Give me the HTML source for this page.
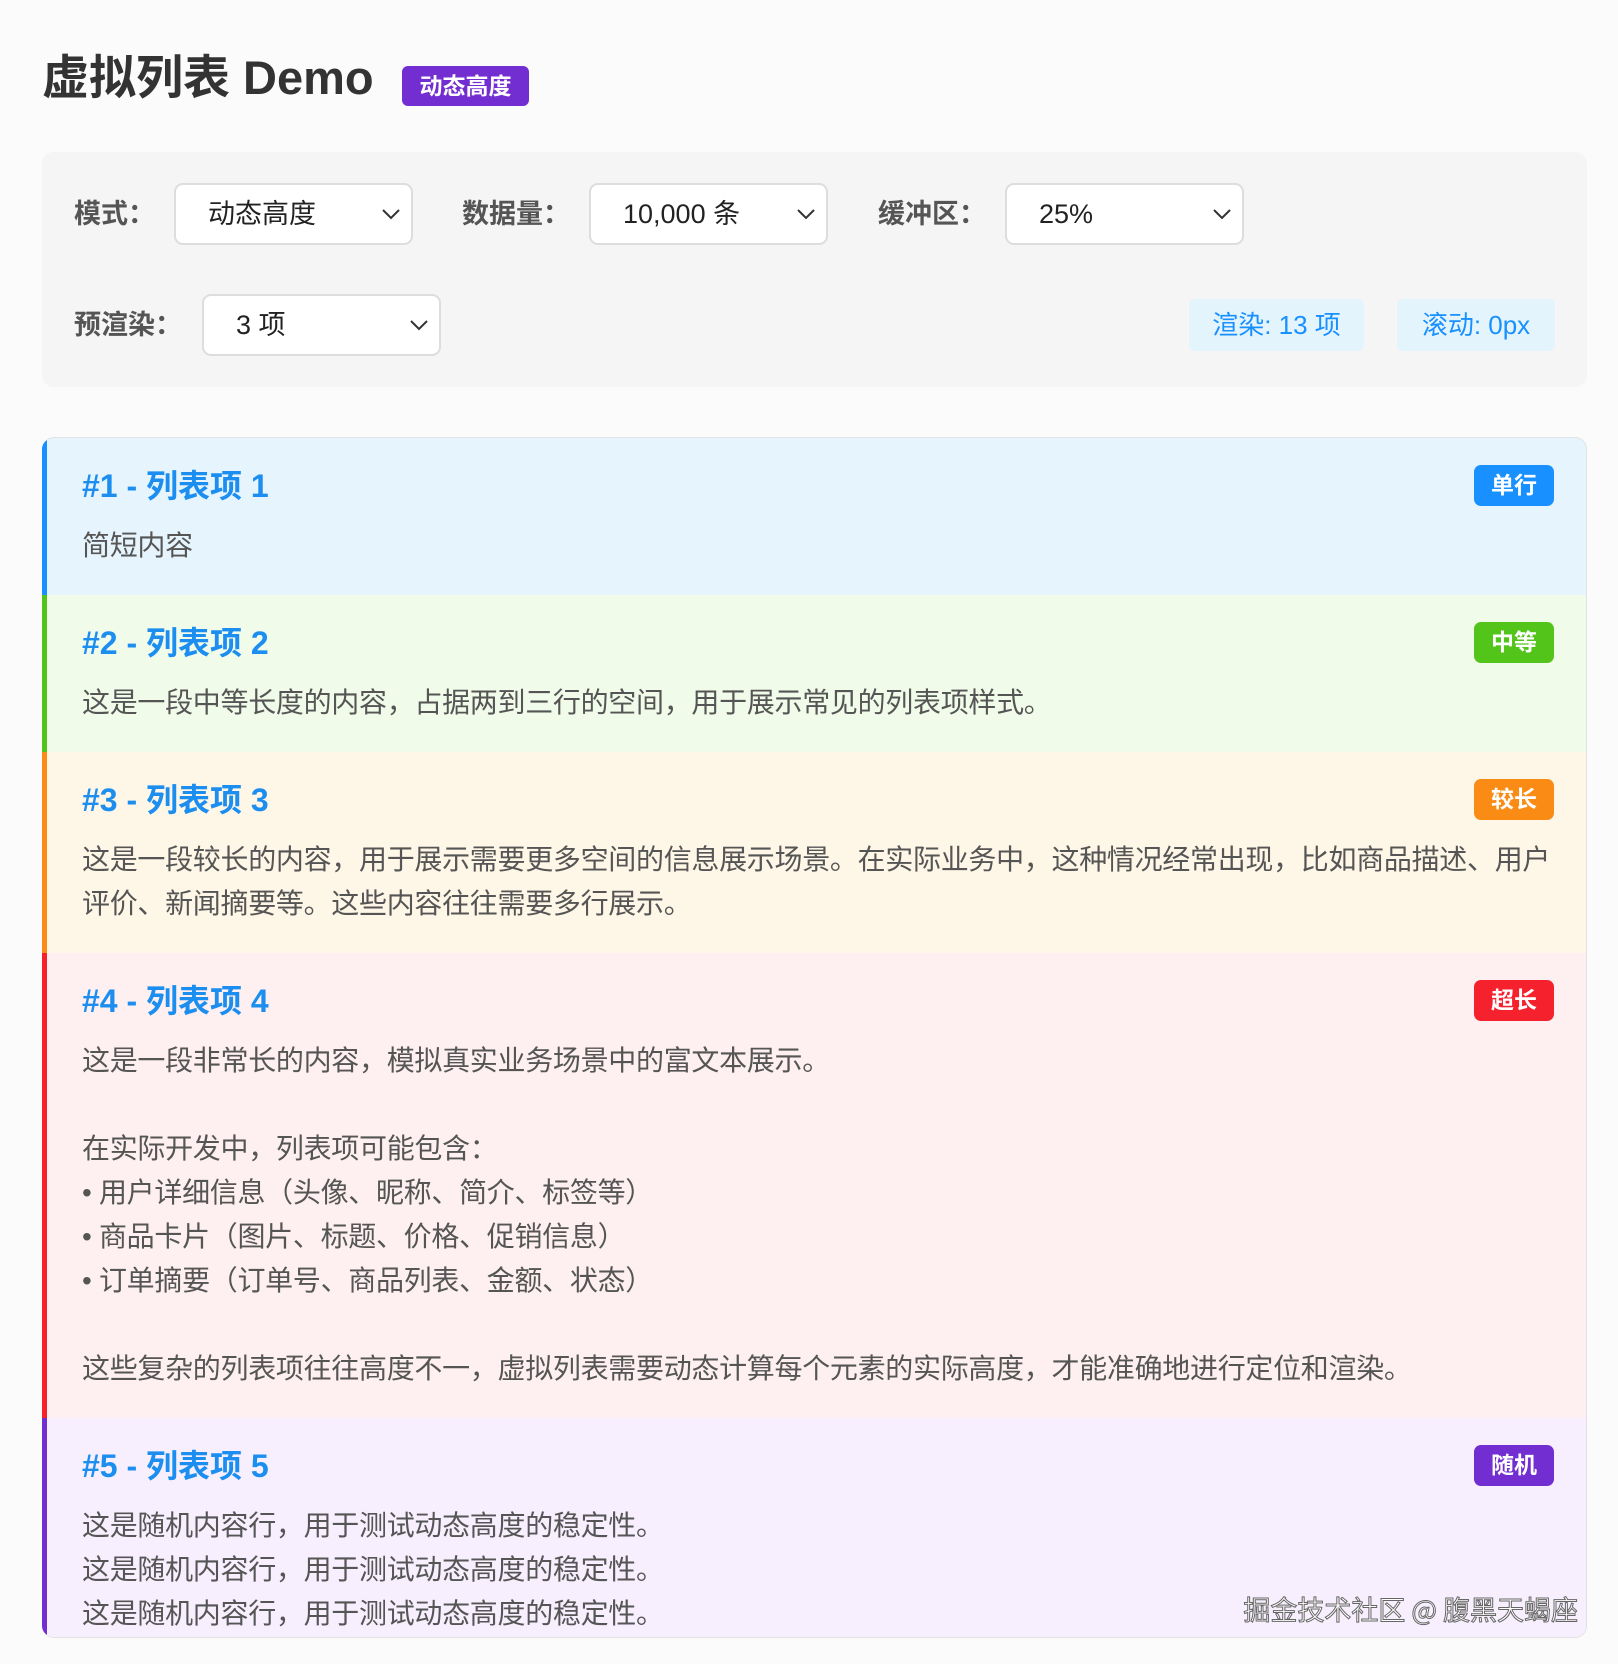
<!DOCTYPE html>
<html><head><meta charset="utf-8"><style>
*{box-sizing:border-box;margin:0;padding:0}
body{width:1618px;height:1664px;background:#fbfbfb;font-family:"Liberation Sans","Noto Sans CJK SC",sans-serif;overflow:hidden;position:relative}
h1{position:absolute;left:42px;top:50px;font-size:47px;font-weight:700;color:#333;line-height:56px}
.hb{position:absolute;left:402px;top:66px;width:127px;height:40px;background:#722ed1;color:#fff;border-radius:6px;font-size:23px;font-weight:700;text-align:center;line-height:40px}
.panel{position:absolute;left:42px;top:152px;width:1545px;height:235px;background:#f5f5f5;border-radius:12px}
.lab{position:absolute;font-size:27px;color:#555;line-height:30px;font-weight:600}
.sel{position:absolute;width:239px;height:62px;background:#fff;border:2px solid #ddd;border-radius:9px;font-size:27px;color:#222;line-height:58px;padding-left:32px}
.sel svg{position:absolute;right:10px;top:22px}
.stat{position:absolute;top:299px;height:52px;background:#e4f4fd;border-radius:6px;color:#1890ff;font-size:26px;line-height:52px;text-align:center}
.list{position:absolute;left:42px;top:437px;width:1545px;height:1201px;border-radius:12px;overflow:hidden;border:1px solid #e2e2e2;border-left:none}
.it{position:relative;border-left:5px solid;padding:24px 32px 27px 35px}
.it h3{font-size:32px;font-weight:700;color:#1b8ef0;line-height:48px;height:48px;margin-bottom:14px}
.it p{font-size:28px;color:#555;line-height:44px;white-space:pre-wrap;letter-spacing:-0.3px}
.tag{position:absolute;right:32px;top:27px;width:80px;height:41px;border-radius:7px;color:#fff;font-weight:700;font-size:23px;text-align:center;line-height:41px}
.wm{position:absolute;right:40px;top:1589px;font-size:27px;color:#fff;-webkit-text-stroke:1px #666;font-family:"Noto Sans CJK SC",sans-serif}
</style></head><body>
<h1>虚拟列表 Demo</h1><div class="hb">动态高度</div>
<div class="panel"></div>
<div class="lab" style="left:74px;top:199px">模式：</div>
<div class="sel" style="left:174px;top:183px">动态高度<svg width="20" height="14"><path d="M2 3l8 8 8-8" fill="none" stroke="#333" stroke-width="2"/></svg></div>
<div class="lab" style="left:462px;top:199px">数据量：</div>
<div class="sel" style="left:589px;top:183px">10,000 条<svg width="20" height="14"><path d="M2 3l8 8 8-8" fill="none" stroke="#333" stroke-width="2"/></svg></div>
<div class="lab" style="left:878px;top:199px">缓冲区：</div>
<div class="sel" style="left:1005px;top:183px">25%<svg width="20" height="14"><path d="M2 3l8 8 8-8" fill="none" stroke="#333" stroke-width="2"/></svg></div>
<div class="lab" style="left:74px;top:310px">预渲染：</div>
<div class="sel" style="left:202px;top:294px">3 项<svg width="20" height="14"><path d="M2 3l8 8 8-8" fill="none" stroke="#333" stroke-width="2"/></svg></div>
<div class="stat" style="left:1189px;width:175px">渲染: 13 项</div>
<div class="stat" style="left:1397px;width:158px">滚动: 0px</div>
<div class="list">
<div class="it" style="border-color:#1890ff;background:#e5f4fd"><h3>#1 - 列表项 1</h3><p>简短内容</p><div class="tag" style="background:#1890ff">单行</div></div>
<div class="it" style="border-color:#52c41a;background:#f1fbe9"><h3>#2 - 列表项 2</h3><p>这是一段中等长度的内容，占据两到三行的空间，用于展示常见的列表项样式。</p><div class="tag" style="background:#52c41a">中等</div></div>
<div class="it" style="border-color:#fa8c16;background:#fef6e6"><h3>#3 - 列表项 3</h3><p>这是一段较长的内容，用于展示需要更多空间的信息展示场景。在实际业务中，这种情况经常出现，比如商品描述、用户评价、新闻摘要等。这些内容往往需要多行展示。</p><div class="tag" style="background:#fa8c16">较长</div></div>
<div class="it" style="border-color:#f5222d;background:#fef0f0"><h3>#4 - 列表项 4</h3><p>这是一段非常长的内容，模拟真实业务场景中的富文本展示。

在实际开发中，列表项可能包含：
• 用户详细信息（头像、昵称、简介、标签等）
• 商品卡片（图片、标题、价格、促销信息）
• 订单摘要（订单号、商品列表、金额、状态）

这些复杂的列表项往往高度不一，虚拟列表需要动态计算每个元素的实际高度，才能准确地进行定位和渲染。</p><div class="tag" style="background:#f5222d">超长</div></div>
<div class="it" style="border-color:#722ed1;background:#f8effe;height:300px"><h3>#5 - 列表项 5</h3><p>这是随机内容行，用于测试动态高度的稳定性。
这是随机内容行，用于测试动态高度的稳定性。
这是随机内容行，用于测试动态高度的稳定性。</p><div class="tag" style="background:#722ed1">随机</div></div>
</div>
<div class="wm">掘金技术社区 @ 腹黑天蝎座</div>
</body></html>
